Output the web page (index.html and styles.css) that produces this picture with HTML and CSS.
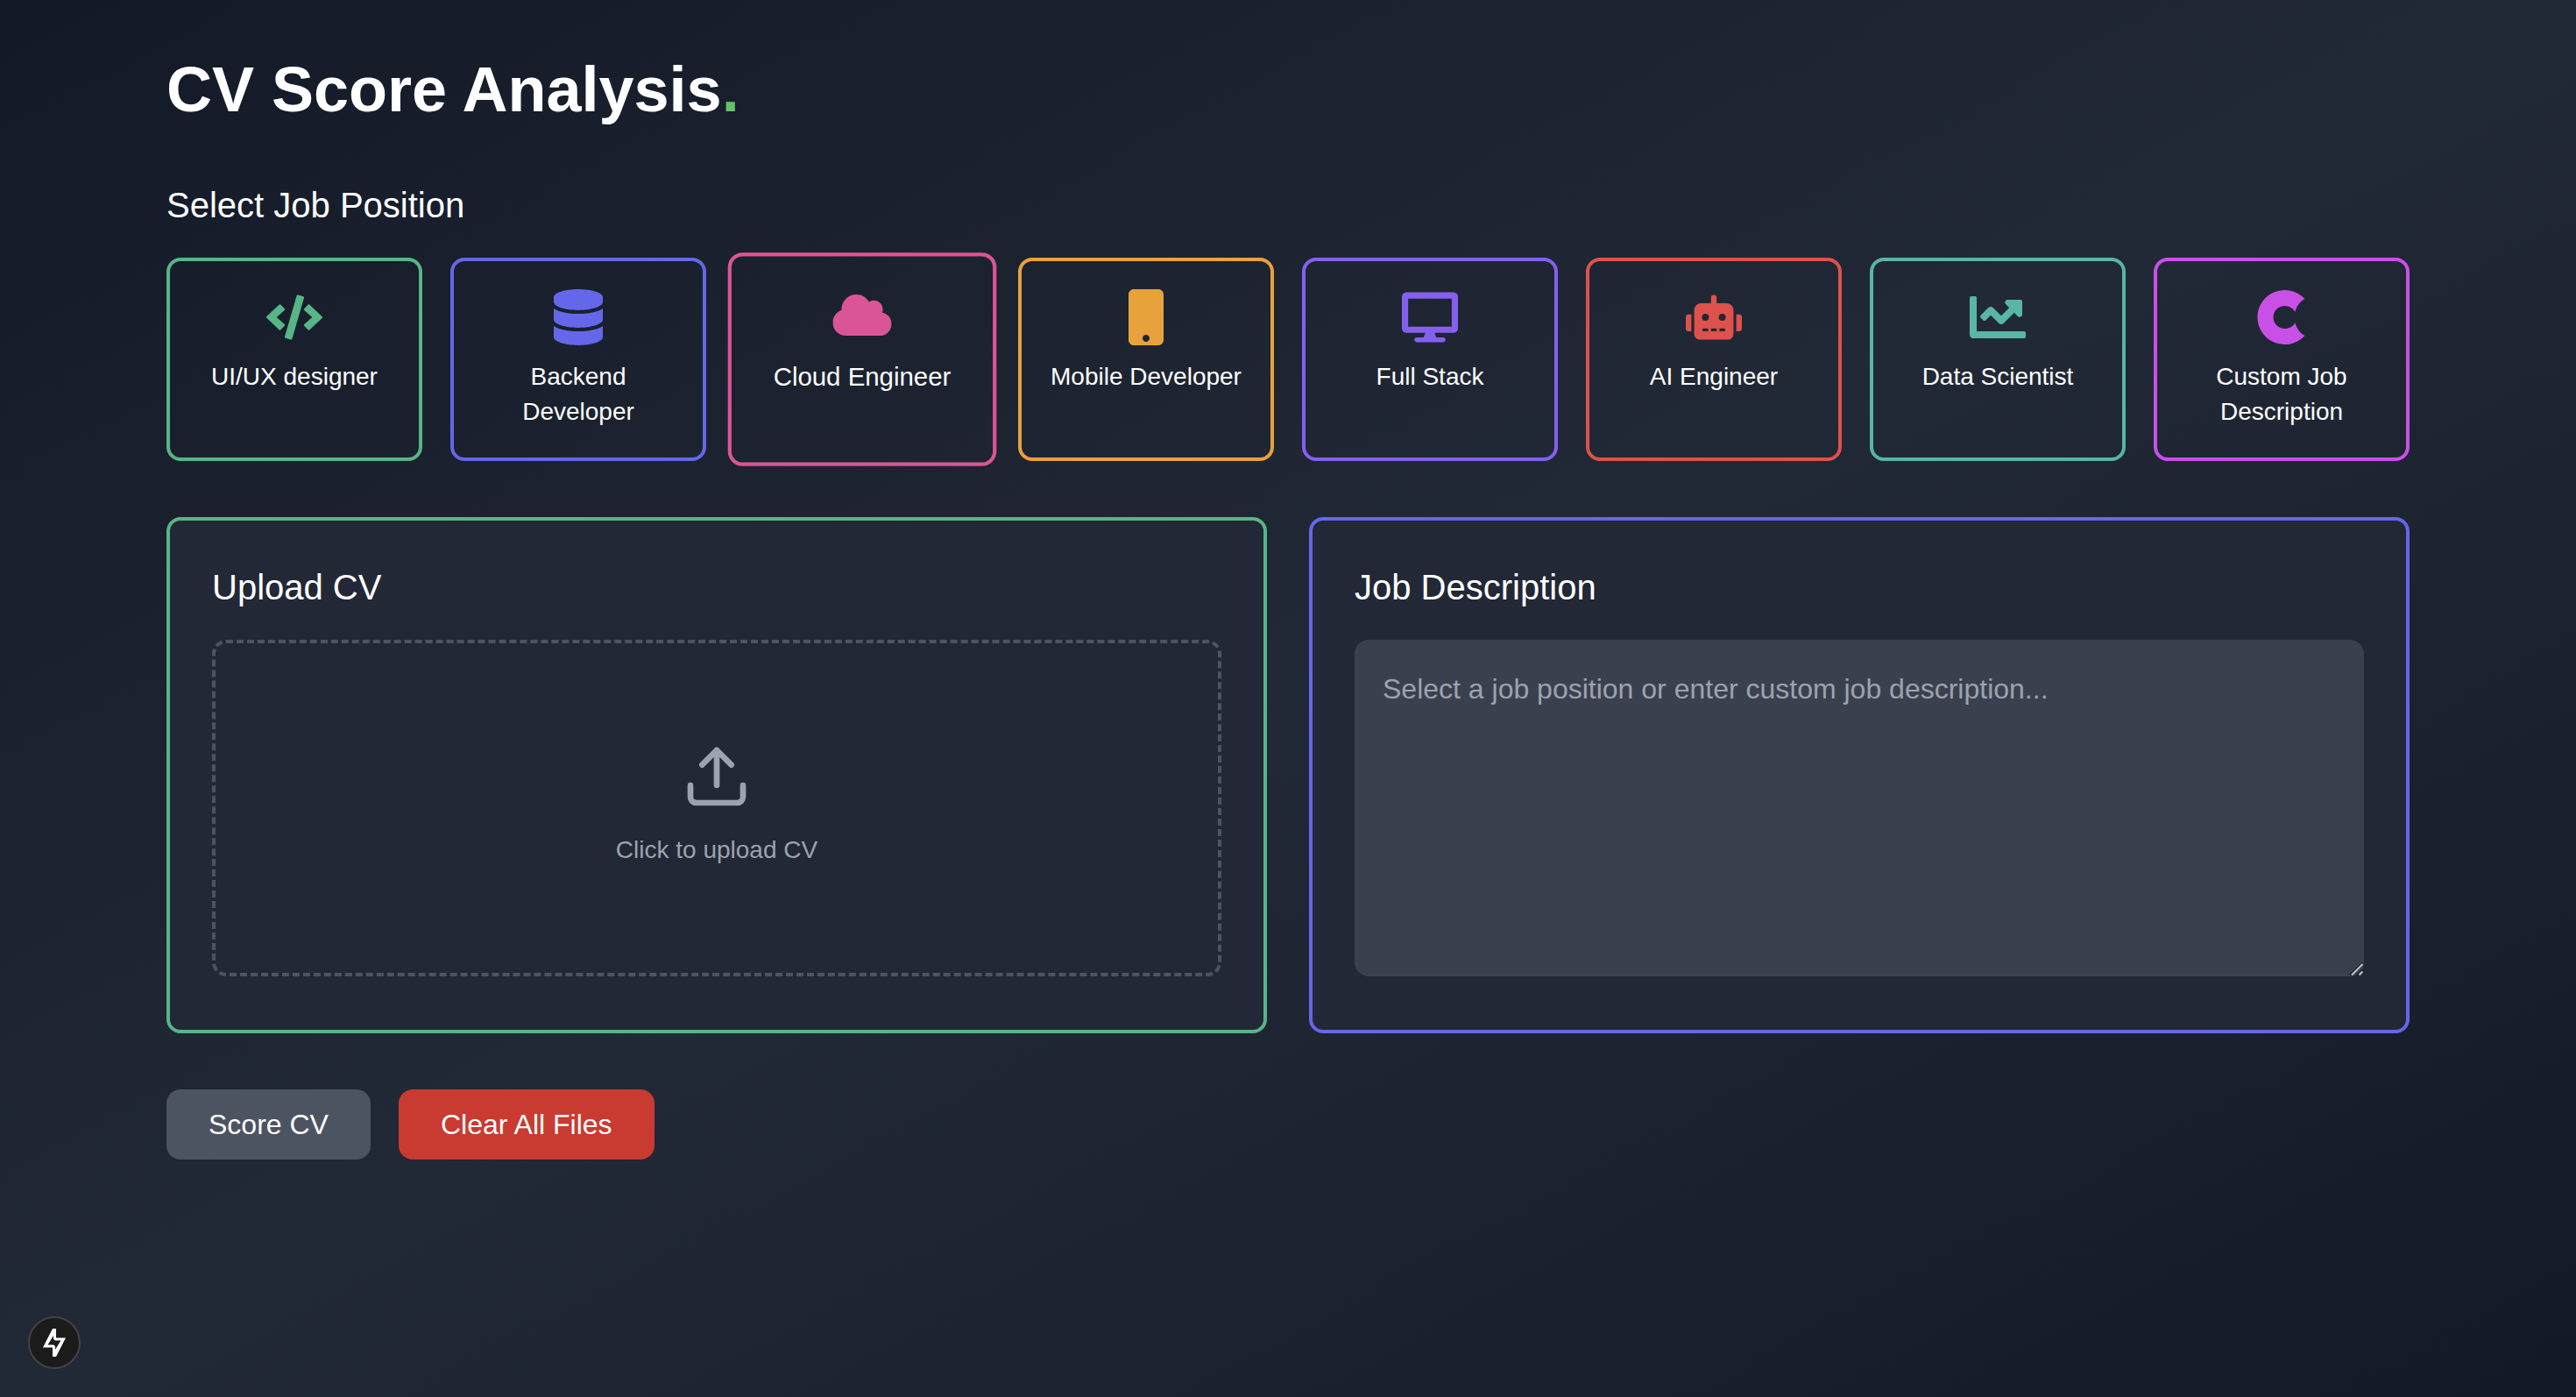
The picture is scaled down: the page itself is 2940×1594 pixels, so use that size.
FILE: index.html
```html
<!DOCTYPE html>
<html lang="en">
<head>
<meta charset="utf-8">
<meta name="viewport" content="width=device-width, initial-scale=1">
<title>CV Score Analysis</title>
<link rel="stylesheet" href="styles.css">
</head>
<body>
<main class="page">
  <h1 class="title">CV Score Analysis<span class="title-dot">.</span></h1>

  <section class="positions">
    <h2 class="heading">Select Job Position</h2>
    <div class="position-grid">
      <button type="button" class="position green">
        <svg class="position-icon" viewBox="0 0 640 512" aria-hidden="true"><path d="M278.9 511.5l-61-17.7c-6.4-1.8-10-8.5-8.2-14.9L346.2 8.7c1.8-6.4 8.5-10 14.9-8.2l61 17.7c6.4 1.8 10 8.5 8.2 14.9L293.8 503.3c-1.9 6.4-8.5 10.1-14.9 8.2zm-114-112.2l43.5-46.4c4.6-4.9 4.3-12.7-.8-17.2L117 256l90.6-79.7c5.1-4.5 5.5-12.3.8-17.2l-43.5-46.4c-4.5-4.8-12.1-5.1-17-.5L3.8 247.2c-5.1 4.7-5.1 12.8 0 17.5l144.1 135.1c4.9 4.6 12.5 4.4 17-.5zm327.2.6l144.1-135.1c5.1-4.7 5.1-12.8 0-17.5L492.1 112.1c-4.8-4.5-12.4-4.3-17 .5L431.6 159c-4.6 4.9-4.3 12.7.8 17.2L523 256l-90.6 79.7c-5.1 4.5-5.5 12.3-.8 17.2l43.5 46.4c4.5 4.9 12.1 5.1 17 .6z"/></svg>
        <span class="position-name">UI/UX designer</span>
      </button>
      <button type="button" class="position indigo">
        <svg class="position-icon" viewBox="0 0 448 512" aria-hidden="true"><path d="M448 73.143v45.714C448 159.143 347.667 192 224 192S0 159.143 0 118.857V73.143C0 32.857 100.333 0 224 0s224 32.857 224 73.143zM448 176v102.857C448 319.143 347.667 352 224 352S0 319.143 0 278.857V176c48.125 33.143 136.208 48.572 224 48.572S399.874 209.143 448 176zm0 160v102.857C448 479.143 347.667 512 224 512S0 479.143 0 438.857V336c48.125 33.143 136.208 48.572 224 48.572S399.874 369.143 448 336z"/></svg>
        <span class="position-name">Backend Developer</span>
      </button>
      <button type="button" class="position pink raised">
        <svg class="position-icon" viewBox="0 0 640 512" aria-hidden="true"><path d="M537.6 226.6c4.1-10.7 6.4-22.4 6.4-34.6 0-53-43-96-96-96-19.7 0-38.1 6-53.3 16.2C367 64.2 315.3 32 256 32c-88.4 0-160 71.6-160 160 0 2.7.1 5.4.2 8.1C40.2 219.8 0 273.2 0 336c0 79.5 64.5 144 144 144h368c70.7 0 128-57.3 128-128 0-61.9-44-113.6-102.4-125.4z"/></svg>
        <span class="position-name">Cloud Engineer</span>
      </button>
      <button type="button" class="position amber">
        <svg class="position-icon" viewBox="0 0 320 512" aria-hidden="true"><path d="M272 0H48C21.5 0 0 21.5 0 48v416c0 26.5 21.5 48 48 48h224c26.5 0 48-21.5 48-48V48c0-26.5-21.5-48-48-48zM160 480c-17.7 0-32-14.3-32-32s14.3-32 32-32 32 14.3 32 32-14.3 32-32 32z"/></svg>
        <span class="position-name">Mobile Developer</span>
      </button>
      <button type="button" class="position violet">
        <svg class="position-icon" viewBox="0 0 576 512" aria-hidden="true"><path d="M528 0H48C21.5 0 0 21.5 0 48v320c0 26.5 21.5 48 48 48h192l-16 48h-72c-13.3 0-24 10.7-24 24s10.7 24 24 24h272c13.3 0 24-10.7 24-24s-10.7-24-24-24h-72l-16-48h192c26.5 0 48-21.5 48-48V48c0-26.5-21.5-48-48-48zm-16 352H64V64h448v288z"/></svg>
        <span class="position-name">Full Stack</span>
      </button>
      <button type="button" class="position red">
        <svg class="position-icon" viewBox="0 0 640 512" aria-hidden="true"><path d="M32,224H64V416H32A31.96166,31.96166,0,0,1,0,384V256A31.96166,31.96166,0,0,1,32,224Zm512-48V448a64.06328,64.06328,0,0,1-64,64H160a64.06328,64.06328,0,0,1-64-64V176a79.974,79.974,0,0,1,80-80H288V32a32,32,0,0,1,64,0V96H464A79.974,79.974,0,0,1,544,176ZM264,256a40,40,0,1,0-40,40A39.997,39.997,0,0,0,264,256Zm-8,128H192v32h64Zm96,0H288v32h64ZM456,256a40,40,0,1,0-40,40A39.997,39.997,0,0,0,456,256Zm-8,128H384v32h64ZM640,256V384a31.96166,31.96166,0,0,1-32,32H576V224h32A31.96166,31.96166,0,0,1,640,256Z"/></svg>
        <span class="position-name">AI Engineer</span>
      </button>
      <button type="button" class="position teal">
        <svg class="position-icon" viewBox="0 0 512 512" aria-hidden="true"><path d="M496 384H64V80c0-8.84-7.16-16-16-16H16C7.16 64 0 71.16 0 80v336c0 17.67 14.33 32 32 32h464c8.84 0 16-7.16 16-16v-32c0-8.84-7.16-16-16-16zM464 96H345.94c-21.38 0-32.09 25.85-16.97 40.97l32.4 32.4L288 242.75l-73.37-73.37c-12.5-12.5-32.76-12.5-45.25 0l-68.69 68.69c-6.25 6.25-6.25 16.38 0 22.63l22.62 22.62c6.25 6.25 16.38 6.25 22.63 0L192 237.25l73.37 73.37c12.5 12.5 32.76 12.5 45.25 0l96-96 32.4 32.4c15.12 15.12 40.97 4.41 40.97-16.97V112c.01-8.84-7.15-16-15.99-16z"/></svg>
        <span class="position-name">Data Scientist</span>
      </button>
      <button type="button" class="position fuchsia">
        <svg class="position-icon" viewBox="0 0 440 512" aria-hidden="true"><path d="M344 305.5c-17.5 31.6-57.4 54.5-96 54.5-56.6 0-104-47.4-104-104s47.4-104 104-104c38.6 0 78.5 22.9 96 54.5 13.7-50.9 41.7-93.3 87-117.8C385.7 39.1 320.5 8 248 8 111 8 0 119 0 256s111 248 248 248c72.5 0 137.7-31.1 183-80.7-45.3-24.5-73.3-66.9-87-117.8z"/></svg>
        <span class="position-name">Custom Job Description</span>
      </button>
    </div>
  </section>

  <div class="panels">
    <section class="panel green">
      <h2 class="heading">Upload CV</h2>
      <label class="dropzone">
        <input class="file-input" type="file">
        <svg class="upload-icon" viewBox="0 0 24 24" aria-hidden="true"><path d="M21 15v4a2 2 0 0 1-2 2H5a2 2 0 0 1-2-2v-4"/><path d="M17 8l-5-5-5 5"/><path d="M12 3v12"/></svg>
        <span class="dropzone-text">Click to upload CV</span>
      </label>
    </section>
    <section class="panel indigo">
      <h2 class="heading"><label for="job-description">Job Description</label></h2>
      <div class="description-field">
        <textarea class="description" id="job-description" placeholder="Select a job position or enter custom job description..."></textarea>
        <svg class="grip" viewBox="0 0 16 16" aria-hidden="true">
          <path class="grip-shade" d="M0.500 14.500L14.500 0.500M9 14.500L14.500 9"/>
          <path class="grip-line" d="M2 14.500L14.500 2M10.500 14.500L14.500 10.500"/>
        </svg>
      </div>
    </section>
  </div>

  <div class="actions">
    <button type="button" class="action action-score">Score CV</button>
    <button type="button" class="action action-clear">Clear All Files</button>
  </div>
</main>

<button type="button" class="indicator" aria-label="Static route">
  <svg class="indicator-icon" viewBox="0 0 26 34" aria-hidden="true"><path class="bolt" fill-rule="evenodd" d="M11 1H15V11.500H26L15 33H11V22.500H0ZM12 9L5.500 19.500H12L14 21V25L20.500 14.500H14L12 13Z"/></svg>
</button>
</body>
</html>
```
FILE: styles.css
```css
*,
*::before,
*::after {
  box-sizing: border-box;
}

body {
  margin: 0;
  min-height: 100vh;
  background: linear-gradient(to bottom right, #131926, #222936, #131926);
  color: #fff;
  font-family: "Liberation Sans", Arial, Helvetica, sans-serif;
  font-size: 32px;
  line-height: 48px;
}

button,
textarea {
  font: inherit;
  color: inherit;
}

button {
  cursor: pointer;
}

.page {
  max-width: 2624px;
  margin: 0 auto;
  padding: 62px 32px;
}

.title {
  margin: 0 0 64px;
  font-size: 72px;
  line-height: 80px;
  font-weight: 700;
}

.title-dot {
  color: #61c36b;
}

.heading {
  margin: 0 0 32px;
  font-size: 40px;
  line-height: 56px;
  font-weight: 400;
}

.position-grid {
  display: grid;
  grid-template-columns: repeat(8, minmax(0, 1fr));
  gap: 32px;
}

.position {
  display: flex;
  flex-direction: column;
  align-items: center;
  gap: 16px;
  padding: 32px;
  border: 4px solid currentColor;
  border-radius: 16px;
  background: none;
}

.raised {
  transform: scale(1.05);
}

.position-icon {
  width: 64px;
  height: 64px;
  fill: currentColor;
}

.position-name {
  color: #fff;
  font-size: 28px;
  line-height: 40px;
  text-align: center;
}

.green { color: #57b586; }
.indigo { color: #6467ea; }
.pink { color: #da5597; }
.amber { color: #e8a23b; }
.violet { color: #8560f0; }
.red { color: #dd524c; }
.teal { color: #58b5a7; }
.fuchsia { color: #c950e7; }

.panels {
  display: grid;
  grid-template-columns: repeat(2, minmax(0, 1fr));
  gap: 48px;
  margin-top: 64px;
}

.panel {
  padding: 48px 48px 61px;
  border: 4px solid currentColor;
  border-radius: 16px;
  background: #222835;
}

.panel .heading {
  color: #fff;
}

.dropzone {
  display: flex;
  flex-direction: column;
  align-items: center;
  justify-content: center;
  gap: 24px;
  height: 384px;
  padding-bottom: 8px;
  border: 4px dashed #4d5461;
  border-radius: 16px;
  color: #9ca3af;
  cursor: pointer;
}

.file-input {
  display: none;
}

.upload-icon {
  width: 80px;
  height: 80px;
  fill: none;
  stroke: currentColor;
  stroke-width: 2;
  stroke-linecap: round;
  stroke-linejoin: round;
}

.dropzone-text {
  font-size: 28px;
  line-height: 40px;
}

.description-field {
  position: relative;
}

.description {
  display: block;
  width: 100%;
  height: 384px;
  padding: 32px;
  border: 0;
  border-radius: 16px;
  background: #3b404f;
  color: #fff;
  resize: vertical;
}

.description::placeholder {
  color: #9ca3af;
}

.description::-webkit-resizer {
  background: transparent;
}

/* Resize handle drawn over the corner of the text box */
.grip {
  position: absolute;
  right: 0;
  bottom: 0;
  width: 16px;
  height: 16px;
  fill: none;
  stroke-width: 2;
  pointer-events: none;
}

.grip-shade {
  stroke: #171b24;
}

.grip-line {
  stroke: #c4c5c9;
}

.actions {
  display: flex;
  gap: 32px;
  margin-top: 64px;
}

.action {
  padding: 16px 48px;
  border: 0;
  border-radius: 16px;
}

.action-score {
  background: #4d5461;
}

.action-clear {
  background: #c93a31;
}

.indicator {
  position: fixed;
  left: 32px;
  bottom: 32px;
  display: flex;
  align-items: center;
  justify-content: center;
  width: 60px;
  height: 60px;
  padding: 0;
  border: 2px solid #434345;
  border-radius: 50%;
  background: #1b1b1c;
}

.indicator-icon {
  width: 26px;
  height: 34px;
}

.bolt {
  fill: #fff;
}
```
